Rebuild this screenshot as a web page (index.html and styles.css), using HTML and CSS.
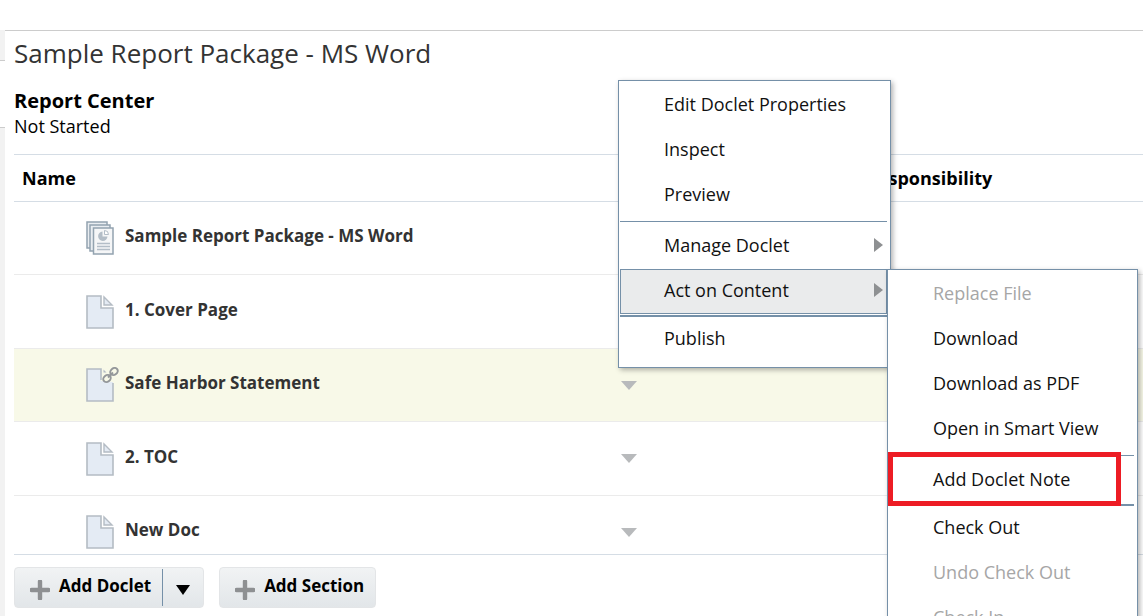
FILE: index.html
```html
<!DOCTYPE html>
<html lang="en">
<head>
    <meta charset="UTF-8">
    <meta name="viewport" content="width=device-width, initial-scale=1.0">
    <title>Report Center</title>
    <link rel="stylesheet" href="styles.css">
</head>
<body>
    <svg class="defs" aria-hidden="true">
        <symbol id="doc" viewBox="0 0 28 34">
            <path d="M1 1H15V13H27V33H1Z" fill="#e4ebf4" stroke="#b4bcc4" stroke-width="1.6"/>
            <path d="M18 2V10H26Z" fill="#e4ebf4" stroke="#b4bcc4" stroke-width="1.4"/>
        </symbol>
        <symbol id="plus" viewBox="0 0 20 20">
            <path d="M10 1.500V18.500M1.500 10H18.500" stroke="#8e9092" stroke-width="4.400" stroke-linecap="round"/>
        </symbol>
    </svg>

    <div class="page">
        <div class="rail">
            <div class="rail-tab"></div>
            <div class="rail-active"></div>
            <div class="rail-rest"></div>
        </div>
        <main class="content">
            <header class="package">
                <h1>Sample Report Package - MS Word</h1>
                <h2>Report Center</h2>
                <p>Not Started</p>
            </header>

            <div class="list">
                <table class="doclets">
                    <thead>
                        <tr>
                            <th class="col-name">Name</th>
                            <th class="col-action"></th>
                            <th>Responsibility</th>
                        </tr>
                    </thead>
                    <tbody>
                        <tr>
                            <td>
                                <div class="doclet">
                                    <svg class="icon" viewBox="0 0 34 36" aria-hidden="true">
                                        <g fill="#e9edf1" stroke="#93a3b0" stroke-width="1.5">
                                            <path d="M1 2H21V28H1Z"/>
                                            <path d="M4 5H24V31H4Z"/>
                                            <path d="M7.500 8H27V34H7.500Z" fill="#f5f6f7"/>
                                        </g>
                                        <path d="M16.500 11.500A4.700 4.700 0 1 0 21.500 16.500H16.500Z" fill="#b3bdc7"/>
                                        <path d="M18.500 10.500V14.500H22.500A4 4 0 0 0 18.500 10.500Z" fill="#fff" stroke="#b3bdc7"/>
                                        <path d="M11 23.500H24M11 26.500H24M11 29.500H24" stroke="#b3bdc7" stroke-width="1.300"/>
                                    </svg>
                                    <span>Sample Report Package - MS Word</span>
                                </div>
                            </td>
                            <td><button class="caret" aria-label="Actions"></button></td>
                            <td></td>
                        </tr>
                        <tr>
                            <td>
                                <div class="doclet">
                                    <svg class="icon" viewBox="0 -1 34 36" aria-hidden="true"><use href="#doc" width="28" height="34"/></svg>
                                    <span>1. Cover Page</span>
                                </div>
                            </td>
                            <td><button class="caret" aria-label="Actions"></button></td>
                            <td></td>
                        </tr>
                        <tr class="selected">
                            <td>
                                <div class="doclet">
                                    <svg class="icon" viewBox="0 -1 34 36" aria-hidden="true">
                                        <path d="M1 1H15V13L27 14V33H1Z" fill="#e4ebf4"/>
                                        <path d="M27 15V33H1V1H15V12" fill="none" stroke="#b4bcc4" stroke-width="1.6"/>
                                        <path d="M17.500 1.500V4.500H20.500Z" fill="#b4bcc4"/>
                                        <g fill="none" stroke="#94979a" stroke-width="2">
                                            <ellipse cx="21" cy="10.500" rx="4" ry="3.200" transform="rotate(-38 21 10.500)"/>
                                            <ellipse cx="28" cy="3.500" rx="4" ry="3.200" transform="rotate(-38 28 3.500)"/>
                                            <path d="M22 9.500L27 4.500"/>
                                        </g>
                                    </svg>
                                    <span>Safe Harbor Statement</span>
                                </div>
                            </td>
                            <td><button class="caret" aria-label="Actions"></button></td>
                            <td></td>
                        </tr>
                        <tr>
                            <td>
                                <div class="doclet">
                                    <svg class="icon" viewBox="0 -1 34 36" aria-hidden="true"><use href="#doc" width="28" height="34"/></svg>
                                    <span>2. TOC</span>
                                </div>
                            </td>
                            <td><button class="caret" aria-label="Actions"></button></td>
                            <td></td>
                        </tr>
                        <tr>
                            <td>
                                <div class="doclet">
                                    <svg class="icon" viewBox="0 -1 34 36" aria-hidden="true"><use href="#doc" width="28" height="34"/></svg>
                                    <span>New Doc</span>
                                </div>
                            </td>
                            <td><button class="caret" aria-label="Actions"></button></td>
                            <td></td>
                        </tr>
                    </tbody>
                </table>
            </div>

            <footer class="toolbar">
                <div class="btn split">
                    <button class="btn-main"><svg class="plus" aria-hidden="true"><use href="#plus"/></svg><span>Add Doclet</span></button>
                    <button class="btn-more" aria-label="More"></button>
                </div>
                <button class="btn btn-main"><svg class="plus" aria-hidden="true"><use href="#plus"/></svg><span>Add Section</span></button>
            </footer>
        </main>
    </div>

    <div class="menu context-menu">
        <button>Edit Doclet Properties</button>
        <button>Inspect</button>
        <button>Preview</button>
        <hr>
        <button class="has-sub">Manage Doclet</button>
        <button class="has-sub open">Act on Content</button>
        <hr class="thick">
        <button>Publish</button>
    </div>

    <div class="menu sub-menu">
        <button disabled>Replace File</button>
        <button>Download</button>
        <button>Download as PDF</button>
        <button>Open in Smart View</button>
        <hr>
        <button>Add Doclet Note</button>
        <hr class="thick">
        <button>Check Out</button>
        <button disabled>Undo Check Out</button>
        <button disabled>Check In</button>
        <div class="highlight"></div>
    </div>
</body>
</html>
```
FILE: styles.css
```css
* {
    box-sizing: border-box;
}
body {
    margin: 0;
    font-family: "Open Sans", sans-serif;
    font-size: 18px;
    color: #000;
    background: #fff;
    overflow: hidden;
}
button {
    font: inherit;
    color: inherit;
    background: none;
    border: none;
    padding: 0;
    cursor: pointer;
}
.defs {
    display: none;
}

/* page frame */
.page {
    display: flex;
    height: 100vh;
    padding-top: 30px;
}
.rail {
    width: 5px;
    display: flex;
    flex-direction: column;
}
.rail-tab {
    height: 31px;
    background: #f2f2f2;
    border-bottom: 1px solid #ccc;
}
.rail-active {
    height: 67px;
    border-bottom: 1px solid #ccc;
}
.rail-rest {
    flex: 1;
    background: #f2f2f2;
}
.content {
    flex: 1;
    min-width: 0;
    display: flex;
    flex-direction: column;
    border-top: 1px solid #ccc;
    padding-left: 9px;
}

/* heading */
.package {
    padding: 4px 0 16px;
}
h1 {
    margin: 0 0 16px;
    font-size: 26px;
    font-weight: 400;
    line-height: 36px;
    color: #333;
}
h2 {
    margin: 0;
    font-size: 20px;
    line-height: 28px;
}
.package p {
    margin: 0;
    line-height: 23px;
}

/* doclet list */
.list {
    flex: 1;
    min-height: 0;
    overflow: hidden;
    border-top: 1px solid #d5dde5;
    border-bottom: 1px solid #d5dde5;
}
.doclets {
    width: 100%;
    table-layout: fixed;
    border-collapse: separate;
    border-spacing: 0;
}
.doclets th {
    height: 47px;
    padding: 0 8px;
    text-align: left;
    font-size: 18px;
    line-height: 26px;
    border-bottom: 1px solid #d5dde5;
}
.doclets td {
    height: 73px;
    padding: 0;
    border-bottom: 1px solid #ebebeb;
}
.doclets tr:nth-child(even) td {
    height: 74px;
}
.col-name {
    width: 607px;
}
.col-action {
    width: 237px;
}
.selected td {
    background: #f8f9e8;
}
.doclet {
    display: flex;
    align-items: center;
    gap: 5px;
    padding-left: 72px;
    font-size: 17px;
    font-weight: 700;
    color: #333;
}
.doclet span {
    padding-bottom: 5px;
}
.icon {
    width: 34px;
    height: 36px;
}
.caret {
    display: block;
    border: 8px solid transparent;
    border-top: 9px solid #b8babc;
    border-bottom: 0;
}

/* bottom buttons */
.toolbar {
    display: flex;
    gap: 15px;
    padding: 12px 0 8px;
}
.btn {
    height: 41px;
    border: 1px solid #e3e5e7;
    border-radius: 4px;
    background: linear-gradient(#f1f3f4, #e2e6e9);
}
.split {
    display: flex;
}
.btn-main {
    display: flex;
    align-items: center;
    gap: 9px;
    padding: 0 11px 0 15px;
    font-size: 17px;
    font-weight: 700;
}
.btn-main span {
    padding-bottom: 4px;
}
.plus {
    width: 20px;
    height: 20px;
    margin-top: 4px;
}
.btn-more {
    width: 41px;
    margin: 1px 0;
    border-left: 1px solid #7590a8;
}
.btn-more::before {
    content: "";
    display: inline-block;
    border: 7px solid transparent;
    border-top: 10px solid #000;
    border-bottom: 0;
}

/* popup menus */
.menu {
    position: absolute;
    display: flex;
    flex-direction: column;
    padding: 2px 3px 5px 1px;
    background: #fff;
    border: 1px solid #7590a8;
    box-shadow: 2px 2px 5px rgba(0, 0, 0, 0.3);
}
.context-menu {
    left: 618px;
    top: 80px;
    width: 273px;
}
.sub-menu {
    left: 887px;
    top: 269px;
    width: 251px;
}
.menu button {
    height: 45px;
    padding: 0 3px 3px 43px;
    border: 1px solid transparent;
    text-align: left;
    color: #111;
}
.menu button:disabled {
    color: #a6a6a6;
}
.menu .has-sub {
    display: flex;
    align-items: center;
    justify-content: space-between;
    padding-bottom: 4px;
}
.has-sub::after {
    content: "";
    border: 7px solid transparent;
    border-left: 9px solid #8e9092;
    border-right: 0;
}
.menu .open {
    background: #eaebec;
    border-color: #7590a8;
}
.menu hr {
    width: 100%;
    height: 1px;
    margin: 3px 0 2px;
    border: none;
    background: #7590a8;
}
.menu .thick {
    height: 2px;
    margin: 1px 0 0;
}
.highlight {
    position: absolute;
    left: 0;
    top: 182px;
    width: 233px;
    height: 54px;
    border: 5px solid #ed1c24;
    pointer-events: none;
}
```
